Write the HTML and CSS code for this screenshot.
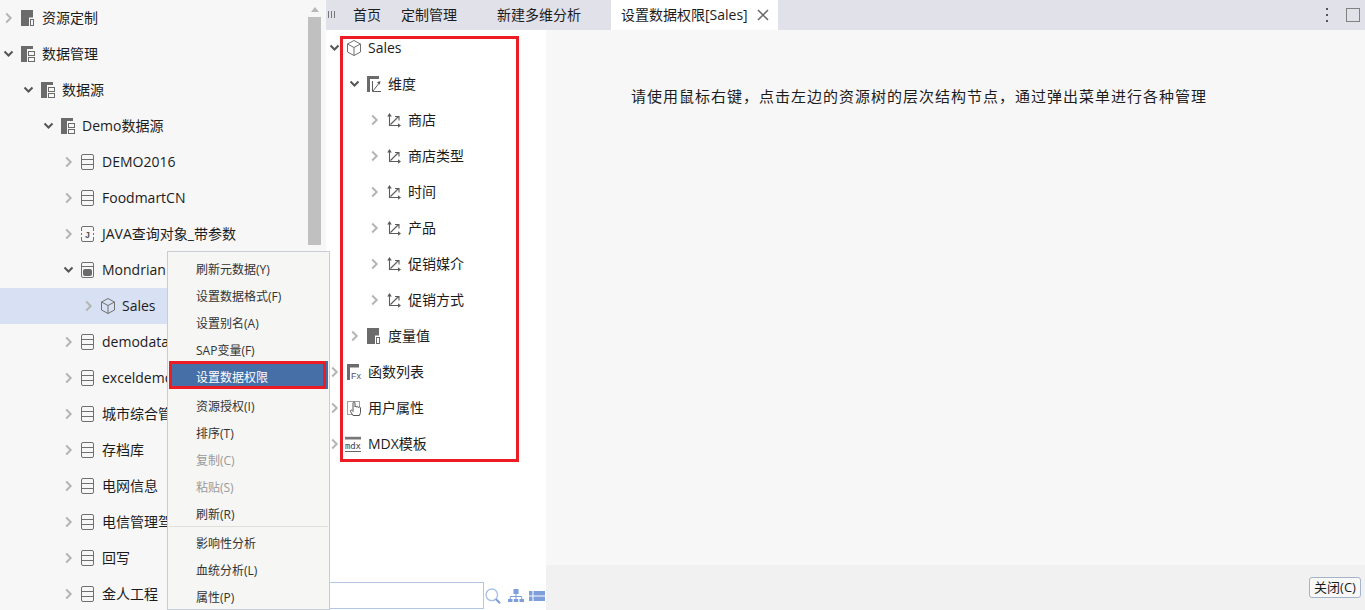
FILE: index.html
```html
<!DOCTYPE html>
<html lang="zh-CN">
<head>
<meta charset="utf-8">
<title>设置数据权限</title>
<link rel="stylesheet" href="styles.css">
</head>
<body>
<svg class="sprite" aria-hidden="true">
  <defs>
    <symbol id="ch-r" viewBox="0 0 16 16"><path d="M6.200 3.500 10.700 8l-4.500 4.500" fill="none" stroke="#b5b5b5" stroke-width="2"/></symbol>
    <symbol id="ch-d" viewBox="0 0 16 16"><path d="M4.500 5.500 8.500 9.500l4-4" fill="none" stroke="#555" stroke-width="2"/></symbol>
    <symbol id="i-a" viewBox="0 0 14 16"><path d="M0 0H12V7.500H8V16H0Z" fill="#6b6b6b"/><rect x="9.500" y="9.500" width="3" height="6" fill="none" stroke="#6b6b6b"/></symbol>
    <symbol id="i-b" viewBox="0 0 14 16"><path d="M0 0H12V3H6V16H0Z" fill="#6b6b6b"/><rect x="7.500" y="5.500" width="6" height="4" fill="none" stroke="#6b6b6b"/><rect x="7.500" y="11.500" width="6" height="4" fill="none" stroke="#6b6b6b"/></symbol>
    <symbol id="i-db" viewBox="0 0 14 16"><rect x=".5" y=".5" width="12" height="15" rx="1.500" fill="none" stroke="#707070"/><path d="M.5 5.500H12.500M.5 10.500H12.500" stroke="#707070"/></symbol>
    <symbol id="i-j" viewBox="0 0 14 16"><path d="M.5 5V2Q.5.5 2 .5H11Q12.500.5 12.500 2V5M12.500 7V9M12.500 11V14Q12.500 15.500 11 15.500H2Q.5 15.500.5 14V11M.5 7V9" fill="none" stroke="#707070"/><text class="svg-j" x="6.500" y="12">J</text></symbol>
    <symbol id="i-mon" viewBox="0 0 14 16"><rect x=".5" y=".5" width="12" height="15" rx="1.500" fill="none" stroke="#707070"/><path d="M.5 4.500H12.500" stroke="#707070"/><rect x="2" y="7" width="9" height="7" rx="2" fill="#6b6b6b"/></symbol>
    <symbol id="i-cube" viewBox="0 0 14 16"><path d="M7 .5 13.500 4V12L7 15.500.5 12V4ZM.5 4 7 7.500 13.500 4M7 7.500V15.500" fill="none" stroke="#707070"/></symbol>
    <symbol id="i-dim" viewBox="0 0 14 16"><path d="M0 0H12V3H3V16H0Z" fill="#6b6b6b"/><path d="M5.500 5V15.500H14M6 15 12.500 6.500" fill="none" stroke="#5f5f5f"/><path d="M13.500 5 9.800 6.200 12.800 8.800Z" fill="#5f5f5f"/></symbol>
    <symbol id="i-axis" viewBox="0 0 14 16"><path d="M2.500 3V13.500H12.500M3.500 12.500 11.500 4.500M8 4.500H12V8.500" fill="none" stroke="#5c5c5c" stroke-width="1.100"/><path d="M2.500 1 .2 4.500H4.800ZM14 13.500 11 11.200V15.800Z" fill="#5c5c5c"/></symbol>
    <symbol id="i-fx" viewBox="0 0 14 16"><path d="M0 0H12V3.500H3V16H0Z" fill="#6b6b6b"/><text class="svg-fx" x="4" y="15">Fx</text></symbol>
    <symbol id="i-hand" viewBox="0 0 14 16"><rect x=".5" y="1.500" width="12" height="13" fill="none" stroke="#a0a0a0"/><path d="M6 15.500 3.500 11.500C3 10.300 4.300 9.600 5 10.500L6 11.500V3C6 1.800 8 1.800 8 3V7C8 6 9.700 6 9.700 7.200 9.700 6.300 11.300 6.300 11.300 7.500 11.300 6.800 13.500 6.800 13.500 8V12.500L12.500 15.500Z" fill="#fff" stroke="#555"/></symbol>
    <symbol id="i-mdx" viewBox="0 0 16 16"><path d="M0 .8H16V3.500H0Z" fill="#777"/><path d="M0 15.500H16" stroke="#666"/><text class="svg-mdx" x="0" y="13">mdx</text></symbol>
    <symbol id="i-search" viewBox="0 0 16 16"><circle cx="6.800" cy="6.800" r="5.800" fill="none" stroke="#a9c0e6" stroke-width="1.400"/><path d="M10.800 11 15 15.200" stroke="#7f9fd8" stroke-width="2"/></symbol>
    <symbol id="i-org" viewBox="0 0 16 16"><path d="M5.500 1H10.500V6H5.500ZM0 11H4.500V14H0ZM5.800 11H10.200V14H5.800ZM11.500 11H16V14H11.500Z" fill="#7f9fdc"/><path d="M8 6V11M2.300 11V8.500H13.700V11" fill="none" stroke="#7f9fdc"/></symbol>
    <symbol id="i-list" viewBox="0 0 16 12"><path d="M0 1H3.500V5.500H0ZM4.500 1H16V5.500H4.500ZM0 6.500H3.500V11H0ZM4.500 6.500H16V11H4.500Z" fill="#7f9fdc"/></symbol>
  </defs>
</svg>

<div class="app">
  <aside class="side">
    <div class="tree">
      <div class="row"><svg class="chev"><use href="#ch-r"/></svg><svg class="ico"><use href="#i-a"/></svg><span>资源定制</span></div>
      <div class="row"><svg class="chev"><use href="#ch-d"/></svg><svg class="ico"><use href="#i-b"/></svg><span>数据管理</span></div>
      <div class="row lv1"><svg class="chev"><use href="#ch-d"/></svg><svg class="ico"><use href="#i-b"/></svg><span>数据源</span></div>
      <div class="row lv2"><svg class="chev"><use href="#ch-d"/></svg><svg class="ico"><use href="#i-b"/></svg><span>Demo数据源</span></div>
      <div class="row lv3"><svg class="chev"><use href="#ch-r"/></svg><svg class="ico"><use href="#i-db"/></svg><span>DEMO2016</span></div>
      <div class="row lv3"><svg class="chev"><use href="#ch-r"/></svg><svg class="ico"><use href="#i-db"/></svg><span>FoodmartCN</span></div>
      <div class="row lv3"><svg class="chev"><use href="#ch-r"/></svg><svg class="ico"><use href="#i-j"/></svg><span>JAVA查询对象_带参数</span></div>
      <div class="row lv3"><svg class="chev"><use href="#ch-d"/></svg><svg class="ico"><use href="#i-mon"/></svg><span>Mondrian</span></div>
      <div class="row lv4 selected"><svg class="chev"><use href="#ch-r"/></svg><svg class="ico"><use href="#i-cube"/></svg><span>Sales</span></div>
      <div class="row lv3"><svg class="chev"><use href="#ch-r"/></svg><svg class="ico"><use href="#i-db"/></svg><span>demodata</span></div>
      <div class="row lv3"><svg class="chev"><use href="#ch-r"/></svg><svg class="ico"><use href="#i-db"/></svg><span>exceldemo</span></div>
      <div class="row lv3"><svg class="chev"><use href="#ch-r"/></svg><svg class="ico"><use href="#i-db"/></svg><span>城市综合管理</span></div>
      <div class="row lv3"><svg class="chev"><use href="#ch-r"/></svg><svg class="ico"><use href="#i-db"/></svg><span>存档库</span></div>
      <div class="row lv3"><svg class="chev"><use href="#ch-r"/></svg><svg class="ico"><use href="#i-db"/></svg><span>电网信息</span></div>
      <div class="row lv3"><svg class="chev"><use href="#ch-r"/></svg><svg class="ico"><use href="#i-db"/></svg><span>电信管理驾驶舱</span></div>
      <div class="row lv3"><svg class="chev"><use href="#ch-r"/></svg><svg class="ico"><use href="#i-db"/></svg><span>回写</span></div>
      <div class="row lv3"><svg class="chev"><use href="#ch-r"/></svg><svg class="ico"><use href="#i-db"/></svg><span>金人工程</span></div>
    </div>
    <div class="scrollbar">
      <div class="scroll-arrow"></div>
      <div class="scroll-thumb"></div>
    </div>
  </aside>

  <section class="work">
    <nav class="tabs">
      <div class="grip"><i></i><i></i><i></i></div>
      <span class="tab tab-home">首页</span>
      <span class="tab tab-custom">定制管理</span>
      <span class="tab tab-new">新建多维分析</span>
      <span class="tab active">设置数据权限[Sales]
        <svg class="close" viewBox="0 0 12 12"><path d="M1 1 11 11M11 1 1 11" stroke="#666" stroke-width="1.500"/></svg>
      </span>
      <div class="tab-tools">
        <div class="dots"><i></i><i></i><i></i></div>
        <div class="maxbox"></div>
      </div>
    </nav>
    <div class="panes">
      <div class="mid">
        <div class="tree mid-tree">
          <div class="row"><svg class="chev"><use href="#ch-d"/></svg><svg class="ico"><use href="#i-cube"/></svg><span>Sales</span></div>
          <div class="row lv1"><svg class="chev"><use href="#ch-d"/></svg><svg class="ico"><use href="#i-dim"/></svg><span>维度</span></div>
          <div class="row lv2"><svg class="chev"><use href="#ch-r"/></svg><svg class="ico"><use href="#i-axis"/></svg><span>商店</span></div>
          <div class="row lv2"><svg class="chev"><use href="#ch-r"/></svg><svg class="ico"><use href="#i-axis"/></svg><span>商店类型</span></div>
          <div class="row lv2"><svg class="chev"><use href="#ch-r"/></svg><svg class="ico"><use href="#i-axis"/></svg><span>时间</span></div>
          <div class="row lv2"><svg class="chev"><use href="#ch-r"/></svg><svg class="ico"><use href="#i-axis"/></svg><span>产品</span></div>
          <div class="row lv2"><svg class="chev"><use href="#ch-r"/></svg><svg class="ico"><use href="#i-axis"/></svg><span>促销媒介</span></div>
          <div class="row lv2"><svg class="chev"><use href="#ch-r"/></svg><svg class="ico"><use href="#i-axis"/></svg><span>促销方式</span></div>
          <div class="row lv1"><svg class="chev"><use href="#ch-r"/></svg><svg class="ico"><use href="#i-a"/></svg><span>度量值</span></div>
          <div class="row"><svg class="chev"><use href="#ch-r"/></svg><svg class="ico"><use href="#i-fx"/></svg><span>函数列表</span></div>
          <div class="row"><svg class="chev"><use href="#ch-r"/></svg><svg class="ico"><use href="#i-hand"/></svg><span>用户属性</span></div>
          <div class="row"><svg class="chev"><use href="#ch-r"/></svg><svg class="ico ico-wide"><use href="#i-mdx"/></svg><span>MDX模板</span></div>
        </div>
        <div class="redbox"></div>
        <div class="searchbar">
          <div class="search-input"></div>
          <svg class="s-ico s-search"><use href="#i-search"/></svg>
          <svg class="s-ico s-org"><use href="#i-org"/></svg>
          <svg class="s-ico s-list"><use href="#i-list"/></svg>
        </div>
      </div>
      <div class="main">
        <p class="msg">请使用鼠标右键，点击左边的资源树的层次结构节点，通过弹出菜单进行各种管理</p>
        <footer class="foot"><button class="btn" type="button">关闭(C)</button></footer>
      </div>
    </div>
  </section>
</div>

<div class="menu">
  <div class="item">刷新元数据(Y)</div>
  <div class="item">设置数据格式(F)</div>
  <div class="item">设置别名(A)</div>
  <div class="item">SAP变量(F)</div>
  <div class="item hl">设置数据权限</div>
  <div class="item">资源授权(I)</div>
  <div class="item">排序(T)</div>
  <div class="item off">复制(C)</div>
  <div class="item off">粘贴(S)</div>
  <div class="item">刷新(R)</div>
  <div class="sep"></div>
  <div class="item">影响性分析</div>
  <div class="item">血统分析(L)</div>
  <div class="item">属性(P)</div>
</div>
</body>
</html>
```

FILE: styles.css
```css
*, *::before, *::after { box-sizing: border-box; }
html, body { margin: 0; height: 100%; }
body {
  position: relative;
  overflow: hidden;
  background: #fff;
  color: #1c1c1c;
  font: 14px/20px "Open Sans", "Noto Sans CJK SC", sans-serif;
}
.sprite { position: absolute; width: 0; height: 0; }
.app { display: flex; height: 610px; }

/* left resource tree */
.side { width: 326px; flex: none; display: flex; background: #f7f7f7; overflow: hidden; }
.side .tree { width: 307px; flex: none; }
.row { display: flex; align-items: center; height: 36px; white-space: nowrap; overflow: hidden; }
.lv1 { padding-left: 20px; }
.lv2 { padding-left: 40px; }
.lv3 { padding-left: 60px; }
.lv4 { padding-left: 80px; }
.selected { background: #d7e1f3; }
.chev { width: 16px; height: 16px; flex: none; }
.ico { width: 14px; height: 16px; flex: none; margin: 0 7px 0 5px; }
.ico-wide { width: 16px; margin: 0 7px 0 3px; }
.svg-j { font: bold 9px "Liberation Mono", monospace; text-anchor: middle; fill: #555; }
.svg-fx { font: 9px "Liberation Sans", sans-serif; fill: #555; }
.svg-mdx { font: 9px "DejaVu Sans Mono", monospace; fill: #444; letter-spacing: -.2px; }

.scrollbar { width: 15px; flex: none; display: flex; flex-direction: column; align-items: center; }
.scroll-arrow {
  width: 0; height: 0; margin: 7px 0 5px;
  border-left: 4px solid transparent;
  border-right: 4px solid transparent;
  border-bottom: 5px solid #b8b8b8;
}
.scroll-thumb { width: 13px; height: 228px; background: #c0c0c0; }

/* tabs and panes */
.work { flex: 1; display: flex; flex-direction: column; min-width: 0; }
.tabs { height: 30px; flex: none; display: flex; align-items: stretch; background: #e1e1ea; }
.grip { width: 27px; flex: none; display: flex; gap: 2px; padding: 11px 0 0 2px; }
.grip i { width: 1px; height: 7px; background: #777; }
.tab { display: flex; align-items: center; white-space: nowrap; }
.tab-custom { margin-left: 20px; }
.tab-new { margin-left: 40px; }
.active { margin-left: 30px; width: 167px; padding-left: 10px; background: #fff; }
.close { width: 12px; height: 12px; margin-left: 9px; flex: none; }
.tab-tools { margin-left: auto; display: flex; align-items: flex-start; padding: 8px 5px 0 0; gap: 18px; }
.dots { display: flex; flex-direction: column; gap: 4px; }
.dots i { width: 2px; height: 2px; background: #555; }
.maxbox { width: 14px; height: 14px; border: 1px solid #808080; }

.panes { flex: 1; display: flex; min-height: 0; }
.mid { position: relative; width: 220px; flex: none; display: flex; flex-direction: column; background: #fff; }
.mid-tree { flex: 1; min-height: 0; }
.redbox { position: absolute; left: 14px; top: 6px; width: 179px; height: 426px; border: 3px solid #ed1c24; }
.searchbar { height: 27px; margin-bottom: 1px; flex: none; display: flex; align-items: center; }
.search-input { width: 158px; height: 27px; background: #fff; border: 1px solid #b4c6e2; }
.s-ico { flex: none; width: 16px; height: 16px; margin-left: 1px; }
.s-org { margin-left: 7px; }
.s-list { height: 12px; margin-left: 5px; }

.main { flex: 1; display: flex; flex-direction: column; background: #f7f7f7; min-width: 0; }
.msg { flex: 1; margin: 0; padding: 56px 0 0 85px; font-size: 15px; line-height: 20px; letter-spacing: 1px; white-space: nowrap; }
.foot { height: 45px; flex: none; display: flex; justify-content: flex-end; align-items: flex-start; padding: 12px 4px 0 0; background: #f1f1f1; }
.btn {
  width: 52px; height: 21px; padding: 0;
  background: #f8f8f8; color: #1c1c1c;
  border: 1px solid #a5b4c8; border-radius: 3px;
  font: 13px/19px "Open Sans", "Noto Sans CJK SC", sans-serif;
}

/* context menu */
.menu {
  position: absolute; left: 167px; top: 251px;
  width: 163px; height: 359px;
  padding: 4px 0 0;
  overflow: hidden;
  background: #f6f6f4;
  border: 1px solid #c8ccd4;
  font-size: 12px;
  color: #333;
}
.item { height: 27px; line-height: 27px; padding-left: 28px; white-space: nowrap; }
.hl {
  position: relative;
  height: 28px; margin: -3px 0 4px 1px; padding: 3px 0 0 27px;
  background: #466fa7; color: #fff;
  width: 159px;
}
.hl::after {
  content: ""; position: absolute; left: 0; top: 0;
  width: 157px; height: 28px; border: 3px solid #ed1c24;
}
.off { color: #9a9a9a; }
.sep { height: 1px; margin: -2px 1px 3px; background: #dfdfdc; }
```
